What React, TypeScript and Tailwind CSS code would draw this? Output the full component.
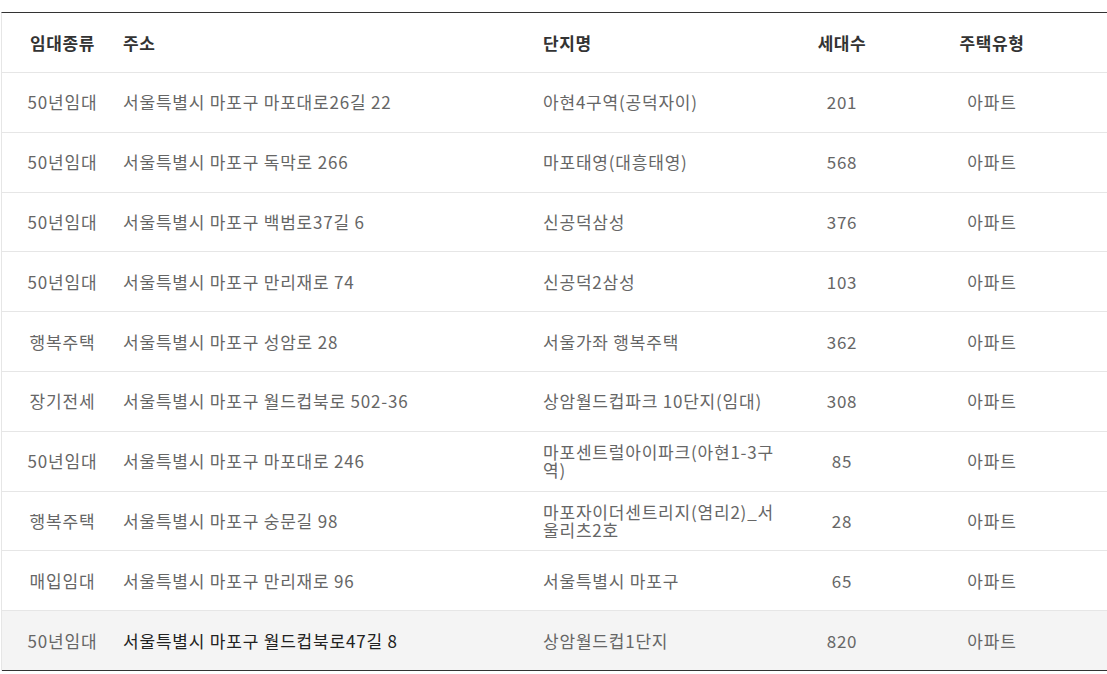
const FONT = `"Noto Sans CJK KR", "Noto Sans", sans-serif`;

interface Row {
  kind: string;
  address: string;
  complex: string;
  units: number;
  type: string;
}

const ROWS: Row[] = [
  { kind: "50년임대", address: "서울특별시 마포구 마포대로26길 22", complex: "아현4구역(공덕자이)", units: 201, type: "아파트" },
  { kind: "50년임대", address: "서울특별시 마포구 독막로 266", complex: "마포태영(대흥태영)", units: 568, type: "아파트" },
  { kind: "50년임대", address: "서울특별시 마포구 백범로37길 6", complex: "신공덕삼성", units: 376, type: "아파트" },
  { kind: "50년임대", address: "서울특별시 마포구 만리재로 74", complex: "신공덕2삼성", units: 103, type: "아파트" },
  { kind: "행복주택", address: "서울특별시 마포구 성암로 28", complex: "서울가좌 행복주택", units: 362, type: "아파트" },
  { kind: "장기전세", address: "서울특별시 마포구 월드컵북로 502-36", complex: "상암월드컵파크 10단지(임대)", units: 308, type: "아파트" },
  { kind: "50년임대", address: "서울특별시 마포구 마포대로 246", complex: "마포센트럴아이파크(아현1-3구역)", units: 85, type: "아파트" },
  { kind: "행복주택", address: "서울특별시 마포구 숭문길 98", complex: "마포자이더센트리지(염리2)_서울리츠2호", units: 28, type: "아파트" },
  { kind: "매입임대", address: "서울특별시 마포구 만리재로 96", complex: "서울특별시 마포구", units: 65, type: "아파트" },
  { kind: "50년임대", address: "서울특별시 마포구 월드컵북로47길 8", complex: "상암월드컵1단지", units: 820, type: "아파트" },
];

const GRID = "grid grid-cols-[121px_420px_249px_100px_1fr] items-center";

export default function App() {
  const hovered = ROWS.length - 1;

  return (
    <div className="min-h-[674px] bg-white pt-3" style={{ fontFamily: FONT }}>
      <div className="ml-px border-l border-t border-l-[#e6e6e6] border-t-[#333333]">
        <div className={`${GRID} h-[60px] border-b border-[#e6e6e6] text-[17px] font-bold tracking-[0.6px] text-[#333]`}>
          <div className="text-center">임대종류</div>
          <div>주소</div>
          <div>단지명</div>
          <div className="text-center">세대수</div>
          <div className="pr-[15px] text-center">주택유형</div>
        </div>

        {ROWS.map((row, i) => {
          const isHover = i === hovered;
          return (
            <div
              key={i}
              className={`${GRID} h-[59.8px] border-b text-[17px] leading-[18px] tracking-[0.8px] text-[#666] ${
                isHover ? "border-[#333] bg-[#f4f4f4]" : "border-[#e6e6e6]"
              }`}
            >
              <div className="text-center">{row.kind}</div>
              <div className={isHover ? "text-[#222]" : ""}>{row.address}</div>
              <div className="pr-[14px]">{row.complex}</div>
              <div className="text-center">{row.units}</div>
              <div className="pr-[15px] text-center">{row.type}</div>
            </div>
          );
        })}
      </div>
    </div>
  );
}
